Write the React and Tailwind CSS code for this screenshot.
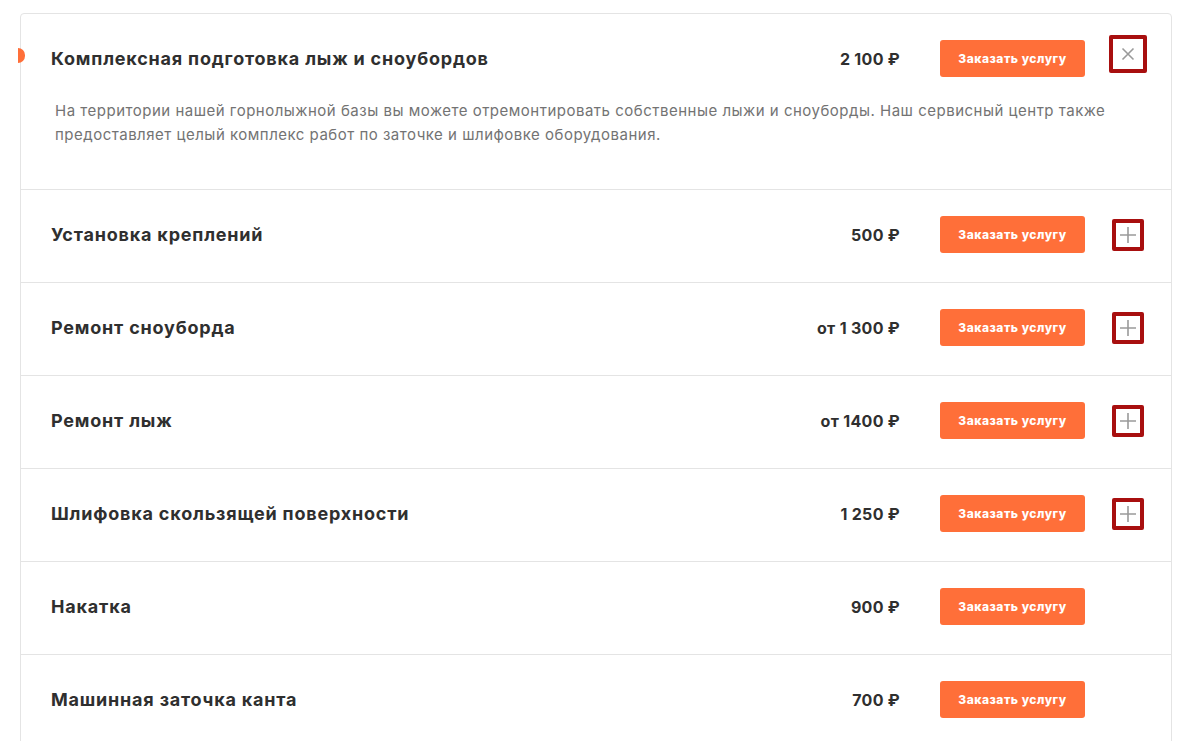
import React from "react";

const rows = [
  { title: "Установка креплений", price: "500 ₽", toggle: true },
  { title: "Ремонт сноуборда", price: "от 1 300 ₽", toggle: true },
  { title: "Ремонт лыж", price: "от 1400 ₽", toggle: true },
  { title: "Шлифовка скользящей поверхности", price: "1 250 ₽", toggle: true },
  { title: "Накатка", price: "900 ₽", toggle: false },
  { title: "Машинная заточка канта", price: "700 ₽", toggle: false },
];

const font = { fontFamily: "Inter, 'Noto Sans', sans-serif" };

function Button() {
  return (
    <button className="w-[145px] h-[37px] rounded-[3px] bg-[#ff6f39] text-white text-[12px] font-extrabold tracking-[0.5px] shrink-0">
      Заказать услугу
    </button>
  );
}

function PlusBox() {
  return (
    <div className="w-[32px] h-[32px] border-[4px] border-[#a80f0f] rounded-[2px] bg-white flex items-center justify-center">
      <svg width="18" height="18" viewBox="0 0 18 18">
        <path d="M9 1v16M1 9h16" stroke="#9a9a9a" strokeWidth="1.6" />
      </svg>
    </div>
  );
}

function CloseBox() {
  return (
    <div className="mb-[10px] w-[38px] h-[38px] border-[4px] border-[#a80f0f] rounded-[2px] bg-white flex items-center justify-center">
      <svg width="14" height="14" viewBox="0 0 14 14">
        <path d="M1.5 1.5l11 11M12.5 1.5l-11 11" stroke="#9a9a9a" strokeWidth="1.6" />
      </svg>
    </div>
  );
}

function Header({ title, price, right }) {
  return (
    <div className="flex items-center pl-[30px]">
      <div className="flex-1 text-[18px] font-bold text-[#2f2f2f] tracking-[0.8px]">{title}</div>
      <div className="text-[16px] font-bold text-[#2f2f2f] text-right tracking-[0.3px]">{price}</div>
      <div className="ml-[40px]">
        <Button />
      </div>
      <div className="w-[86px] flex justify-center items-center">{right}</div>
    </div>
  );
}

export default function App() {
  return (
    <div className="bg-white pt-[13px] pl-[20px] overflow-hidden h-[741px]" style={font}>
      <div className="relative w-[1152px] border border-[#e4e4e4] rounded-[4px] bg-white">
        <span className="absolute left-[-3px] top-[34px] w-[7px] h-[15px] rounded-r-full bg-[#ff6f39]" />
        <div className="border-b border-[#e4e4e4]">
          <div className="h-[85px] pt-[4px] flex flex-col justify-center">
            <Header title="Комплексная подготовка лыж и сноубордов" price="2 100 ₽" right={<CloseBox />} />
          </div>
          <div className="pl-[34px] pr-[40px] pb-[42px] text-[15px] leading-[24px] text-[#737373] tracking-[0.5px]">
            На территории нашей горнолыжной базы вы можете отремонтировать собственные лыжи и сноуборды. Наш сервисный центр также предоставляет целый комплекс работ по заточке и шлифовке оборудования.
          </div>
        </div>
        {rows.map((r, i) => (
          <div key={i} className="h-[93px] pb-[3px] border-b border-[#e4e4e4] flex flex-col justify-center">
            <Header title={r.title} price={r.price} right={r.toggle ? <PlusBox /> : null} />
          </div>
        ))}
      </div>
    </div>
  );
}
